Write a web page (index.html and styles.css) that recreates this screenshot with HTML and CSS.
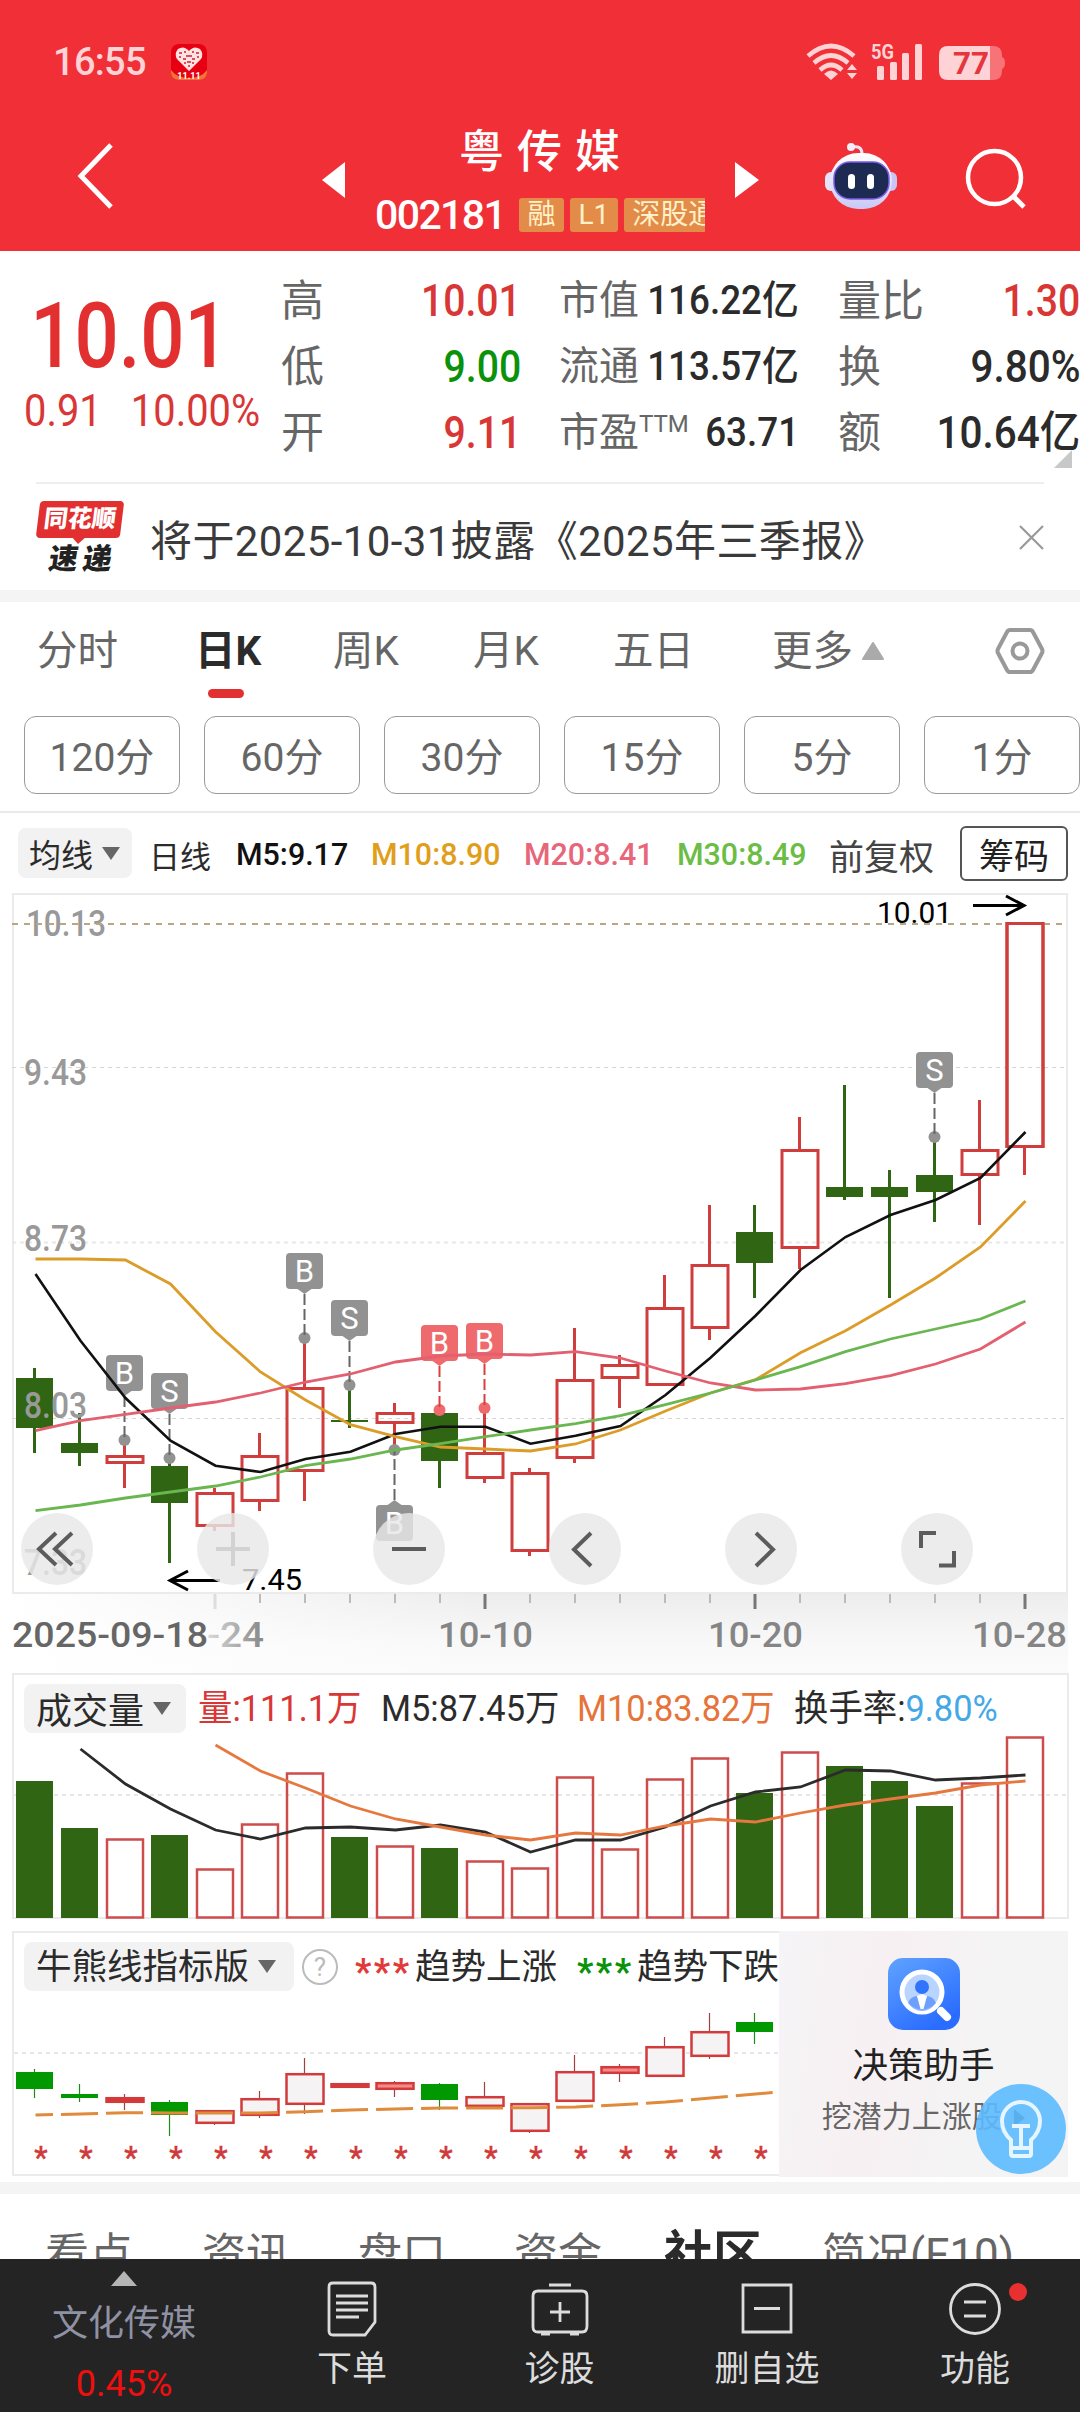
FILE: index.html
```html
<!DOCTYPE html>
<html lang="zh-CN">
<head>
  <meta charset="UTF-8">
  <meta name="viewport" content="width=device-width, initial-scale=1.0">
  <title>粤传媒 002181</title>
  <link rel="stylesheet" href="styles.css">
</head>
<body>
  <header class="header">
    <div class="status-bar">
      <span class="clock">16:55</span>
      <svg class="app-icon" width="36" height="36" viewBox="0 0 36 36">
        <rect width="36" height="36" rx="8" fill="#e60012"/>
        <path d="M0 26Q6 34 18 34T36 26V29Q35 36 28 36H8Q1 36 0 29Z" fill="#f4713a"/>
        <path d="M18 27L6 15Q3 10 7 5Q13 1 18 7Q23 1 29 5Q33 10 30 15Z" fill="#ffe3e3"/>
        <path d="M8 9h3M13 8h2M21 8h2M25 9h3M15 12h6M8 13h2M12 15h3M21 15h3M26 13h2M16 18h4M13 19h2M21 19h2M17 22h2" stroke="#d0202c" stroke-width="1.500"/>
        <text x="18" y="35" font-size="9" font-weight="700" text-anchor="middle" fill="#fff">11.11</text>
      </svg>
      <svg class="status-icons" width="200" height="40" viewBox="806 42 200 40">
        <g fill="none" stroke="#ffd3d5" stroke-width="4.6">
          <path d="M808 56Q831 36 854 56"/>
          <path d="M814 63Q831 48 848 63"/>
          <path d="M820 70Q831 60 842 70"/>
        </g>
        <g fill="#ffd3d5">
          <path d="M824 74Q831 67 838 74L831 80Z"/>
          <path d="M847 70L852 64L857 70ZM847 73H857L852 79Z"/>
          <text x="871" y="59" font-size="21" font-weight="700" textLength="23" lengthAdjust="spacingAndGlyphs">5G</text>
          <rect x="877" y="66" width="7" height="14" rx="1.5"/>
          <rect x="890" y="62" width="7" height="18" rx="1.5"/>
          <rect x="902" y="53" width="7" height="27" rx="1.5"/>
          <rect x="915" y="44" width="7" height="36" rx="1.5"/>
        </g>
        <path d="M990 46H993Q1002 46 1002 55V57Q1005 58 1005 63Q1005 68 1002 69V71Q1002 80 993 80H990Z" fill="#f87378"/>
        <path d="M948 46H990V80H948Q939 80 939 71V55Q939 46 948 46Z" fill="#ffd3d5"/>
        <text x="953" y="74" font-size="31" font-weight="700" fill="#e5363e" textLength="36" lengthAdjust="spacingAndGlyphs">77</text>
      </svg>
    </div>
    <div class="title-bar">
      <svg class="back" width="40" height="72" viewBox="0 0 40 72"><path d="M35 5L5 36L35 67" fill="none" stroke="#fff" stroke-width="5"/></svg>
      <svg class="prev" width="23" height="36" viewBox="0 0 23 36"><path d="M23 0V36L0 18Z" fill="#fff"/></svg>
      <div class="stock">
        <h1>粤传媒</h1>
        <div class="stock-sub">
          <span class="code">002181</span>
          <span class="tag">融</span>
          <span class="tag">L1</span>
          <span class="tag">深股通</span>
        </div>
      </div>
      <svg class="next" width="24" height="36" viewBox="0 0 24 36"><path d="M0 0V36L24 18Z" fill="#fff"/></svg>
      <svg class="robot" width="74" height="68" viewBox="825 142 74 68">
        <defs>
          <linearGradient id="shell" x1="0" y1="0" x2="0" y2="1">
            <stop offset="0" stop-color="#fff"/><stop offset="1" stop-color="#c9c8f6"/>
          </linearGradient>
        </defs>
        <path d="M852 147Q862 145 862 154" fill="none" stroke="#e9e4f8" stroke-width="3"/>
        <circle cx="851" cy="147" r="4" fill="#f3eefb"/>
        <rect x="825" y="172" width="14" height="19" rx="6" fill="#e4e3fa"/>
        <rect x="883" y="172" width="14" height="19" rx="6" fill="#c8c6f5"/>
        <rect x="830" y="153" width="62" height="56" rx="28" fill="url(#shell)"/>
        <rect x="834" y="162" width="55" height="37" rx="16" fill="#1d2a52" stroke="#7c5be8" stroke-width="1.5"/>
        <rect x="848" y="174" width="7" height="15" rx="3.5" fill="#fff"/>
        <rect x="867" y="174" width="7" height="15" rx="3.5" fill="#fff"/>
      </svg>
      <svg class="search" width="62" height="62" viewBox="965 147 62 62">
        <circle cx="994.5" cy="177.500" r="26.500" fill="none" stroke="#fff" stroke-width="4.500"/>
        <path d="M1013 196L1024 207" stroke="#fff" stroke-width="5"/>
      </svg>
    </div>
  </header>

  <section class="quote">
    <div class="price">
      <div class="last">10.01</div>
      <div class="change"><span>0.91</span><span>10.00%</span></div>
    </div>
    <dl class="col">
      <dt>高</dt><dd class="num up">10.01</dd>
      <dt>低</dt><dd class="num down">9.00</dd>
      <dt>开</dt><dd class="num up">9.11</dd>
    </dl>
    <dl class="col col-cap">
      <dt>市值</dt><dd class="num">116.22亿</dd>
      <dt>流通</dt><dd class="num">113.57亿</dd>
      <dt>市盈<sup>TTM</sup></dt><dd class="num">63.71</dd>
    </dl>
    <dl class="col col-amount">
      <dt>量比</dt><dd class="num up">1.30</dd>
      <dt>换</dt><dd class="num wide">9.80%</dd>
      <dt>额</dt><dd class="num wide">10.64亿</dd>
    </dl>
    <span class="corner"></span>
  </section>

  <section class="news">
    <div class="news-logo"><b>同花顺</b><i>速递</i></div>
    <p>将于2025-10-31披露《2025年三季报》</p>
    <svg width="25" height="25" viewBox="0 0 25 25"><path d="M1 1L24 24M24 1L1 24" stroke="#999" stroke-width="2.200"/></svg>
  </section>

  <div class="band"></div>

  <nav class="tabs">
    <span>分时</span>
    <span class="active">日K</span>
    <span>周K</span>
    <span>月K</span>
    <span>五日</span>
    <span>更多<svg width="22" height="18" viewBox="0 0 22 18"><path d="M11 1L21 17H1Z" fill="#aaa" stroke="#aaa" stroke-width="2" stroke-linejoin="round"/></svg></span>
    <svg width="50" height="48" viewBox="0 0 50 48">
      <path d="M15 3H35Q37 3 38 5L47 22Q48 24 47 26L38 43Q37 45 35 45H15Q13 45 12 43L3 26Q2 24 3 22L12 5Q13 3 15 3Z" fill="none" stroke="#999" stroke-width="4"/>
      <circle cx="25" cy="24" r="7.500" fill="none" stroke="#999" stroke-width="4"/>
    </svg>
  </nav>

  <div class="periods">
    <button>120分</button>
    <button>60分</button>
    <button>30分</button>
    <button>15分</button>
    <button>5分</button>
    <button>1分</button>
  </div>

  <div class="legend ma-legend">
    <span class="pill">均线<i class="caret"></i></span>
    <span class="day">日线</span>
    <span class="ma5">M5:9.17</span>
    <span class="ma10">M10:8.90</span>
    <span class="ma20">M20:8.41</span>
    <span class="ma30">M30:8.49</span>
    <span class="adjust">前复权</span>
    <button class="chips">筹码</button>
  </div>

  <section class="kline">
    <svg id="kline" width="1080" height="780" viewBox="0 893 1080 780"></svg>
    <div class="controls">
      <button><svg viewBox="0 0 72 72"><path d="M35 20L18 36L35 52M51 20L34 36L51 52"/></svg></button>
      <button class="disabled"><svg viewBox="0 0 72 72"><path d="M19 36H53M36 19V53"/></svg></button>
      <button><svg viewBox="0 0 72 72"><path d="M19 36H53"/></svg></button>
      <button><svg viewBox="0 0 72 72"><path d="M42 20L25 36.500L42 53"/></svg></button>
      <button><svg viewBox="0 0 72 72"><path d="M31 20L48 36.500L31 53"/></svg></button>
      <button><svg viewBox="0 0 72 72"><path d="M20 35V20H35M38 52.500H53V38"/></svg></button>
    </div>
  </section>

  <section class="volume">
    <div class="legend vol-legend">
      <span class="pill">成交量<i class="caret"></i></span>
      <span class="up">量:111.1万</span>
      <span>M5:87.45万</span>
      <span class="vol10">M10:83.82万</span>
      <span class="rate">换手率:<em>9.80%</em></span>
    </div>
    <svg id="volume" width="1052" height="184" viewBox="14 1735 1052 184"></svg>
  </section>

  <section class="indicator">
    <div class="bull">
      <div class="legend bull-legend">
        <span class="pill">牛熊线指标版<i class="caret"></i></span>
        <svg width="36" height="36" viewBox="0 0 36 36">
          <circle cx="18" cy="18" r="17" fill="none" stroke="#bbb" stroke-width="2"/>
          <text x="18" y="27" font-size="26" text-anchor="middle" fill="#bbb">?</text>
        </svg>
        <span class="trend-up"><em>***</em>趋势上涨</span>
        <span class="trend-down"><em>***</em>趋势下跌</span>
      </div>
      <svg id="bull" width="765" height="182" viewBox="14 1993 765 182"></svg>
    </div>
    <aside class="promo">
      <svg width="72" height="72" viewBox="0 0 72 72">
        <defs>
          <linearGradient id="blue" x1="0" y1="0" x2="0.600" y2="1">
            <stop offset="0" stop-color="#60a3ff"/><stop offset="1" stop-color="#2a6cff"/>
          </linearGradient>
        </defs>
        <rect width="72" height="72" rx="15" fill="url(#blue)"/>
        <circle cx="34" cy="34" r="20" fill="#b9d5ff" stroke="#fff" stroke-width="5"/>
        <circle cx="34" cy="29" r="7" fill="#2f74fb"/>
        <path d="M20 45Q22 39 29 38L34 50L39 38Q46 39 48 45Q42 53 34 53Q26 53 20 45Z" fill="#2f74fb" opacity=".55"/>
        <path d="M29 38L34 36L39 38L35.500 51H32.500Z" fill="#fff"/>
        <path d="M53 53L59 59" stroke="#fff" stroke-width="8" stroke-linecap="round"/>
      </svg>
      <strong>决策助手</strong>
      <small>挖潜力上涨股 <i></i></small>
    </aside>
  </section>

  <div class="band"></div>

  <nav class="sections">
    <span>看点</span>
    <span>资讯</span>
    <span>盘口</span>
    <span>资金</span>
    <span class="active">社区</span>
    <span>简况(F10)</span>
  </nav>

  <footer class="bottom-nav">
    <div class="sector">
      <svg width="26" height="15" viewBox="0 0 26 15"><path d="M13 0L26 15H0Z" fill="#b5b5b5"/></svg>
      <span>文化传媒</span>
      <b>0.45%</b>
    </div>
    <div class="item">
      <svg width="60" height="60" viewBox="0 0 60 60"><path d="M11 4H49Q53 4 53 8V43L43 56H11Q7 56 7 52V8Q7 4 11 4ZM14 17H46M14 24H46M14 31H46M14 38H37"/></svg>
      <span>下单</span>
    </div>
    <div class="item">
      <svg width="60" height="60" viewBox="0 0 60 60"><path d="M8 12H52Q57 12 57 17V47Q57 53 52 53H8Q3 53 3 48V17Q3 12 8 12ZM19 6H41M20 33H40M30 23V43M11 55H20M40 55H49"/></svg>
      <span>诊股</span>
    </div>
    <div class="item">
      <svg width="60" height="60" viewBox="0 0 60 60"><path d="M6 6H54V53H6ZM17 29.500H43"/></svg>
      <span>删自选</span>
    </div>
    <div class="item">
      <svg width="60" height="60" viewBox="0 0 60 60"><circle cx="30" cy="30" r="24.500"/><path d="M19 23H41M19 37H41"/></svg>
      <span>功能</span>
      <i class="dot"></i>
    </div>
  </footer>

  <div class="bulb">
    <svg width="90" height="90" viewBox="0 0 90 90">
      <path d="M35 61V56Q26 48 26 37A19 19 0 0 1 64 37Q64 48 55 56V70Q55 72 53 72H37Q35 72 35 70ZM36 64H54M45 62V43M36 42H54"/>
    </svg>
  </div>

  <script>
    const RED = '#cf3d3d';
    const GREEN = '#306514';
    const cx = i => 34.5 + i * 45;

    function rect(x, y, w, h, attrs) {
      return `<rect x="${x}" y="${y}" width="${w}" height="${h}" ${attrs}/>`;
    }

    function line(x1, y1, x2, y2, color, width, extra = '') {
      return `<line x1="${x1}" y1="${y1}" x2="${x2}" y2="${y2}" stroke="${color}" stroke-width="${width}" ${extra}/>`;
    }

    function label(x, y, str, size, length, color, extra = '') {
      return `<text x="${x}" y="${y}" font-size="${size}" fill="${color}" textLength="${length}" lengthAdjust="spacingAndGlyphs" ${extra}>${str}</text>`;
    }

    // values start at candle number "from"
    function curve(values, color, width, from = 0, extra = '') {
      const points = values.map((y, i) => `${cx(i + from) + 1},${y}`).join(' ');
      return `<polyline points="${points}" fill="none" stroke="${color}" stroke-width="${width}" ${extra}/>`;
    }

    // [type, body top, body bottom, wick top, wick bottom]
    const candles = [
      ['g', 1378, 1428, 1368, 1453], ['g', 1443, 1453, 1413, 1466], ['r', 1455, 1464, 1441, 1488],
      ['g', 1466, 1503, 1458, 1563], ['r', 1492, 1527, 1488, 1531], ['r', 1455, 1502, 1433, 1511],
      ['r', 1387, 1472, 1338, 1501], ['g', 1420, 1422, 1385, 1428], ['r', 1412, 1424, 1403, 1448],
      ['g', 1413, 1461, 1411, 1488], ['r', 1452, 1479, 1408, 1483], ['r', 1472, 1552, 1468, 1556],
      ['r', 1379, 1459, 1328, 1463], ['r', 1364, 1379, 1355, 1408], ['r', 1307, 1386, 1275, 1386],
      ['r', 1264, 1329, 1205, 1340], ['g', 1232, 1263, 1205, 1298], ['r', 1149, 1249, 1117, 1269],
      ['g', 1187, 1197, 1085, 1200], ['g', 1187, 1197, 1170, 1298], ['g', 1175, 1192, 1137, 1222],
      ['r', 1149, 1176, 1100, 1225], ['r', 922, 1148, 922, 1175]
    ];

    const ma5 = [1274, 1340.7, 1398, 1440.7, 1465.7, 1472, 1459, 1451.7, 1434, 1426.7, 1426.7, 1443.7, 1435.7, 1426, 1395, 1357.7, 1315.7, 1270, 1237, 1215, 1200, 1178, 1132];
    const ma10 = [1259, 1259, 1260, 1284, 1331.7, 1372, 1400, 1424.7, 1436.7, 1447, 1449, 1451, 1444, 1430, 1411, 1393, 1379.7, 1352.7, 1330.7, 1305, 1278, 1247, 1201];
    const ma20 = [1430.7, 1420.7, 1414.3, 1408, 1402, 1393, 1382, 1374, 1362, 1356, 1354, 1355, 1351.7, 1358, 1371, 1383, 1390, 1389, 1383.7, 1375.7, 1364, 1349, 1322];
    const ma30 = [1510.7, 1505, 1498, 1492, 1486, 1477, 1465.7, 1459, 1450, 1443.7, 1436.7, 1430, 1423.7, 1415.7, 1404.7, 1393, 1380, 1366.7, 1351.7, 1339, 1329, 1319, 1301];

    // buy / sell flags: [candle, letter, box top, dot y, color]
    const flags = [
      [2, 'B', 1355, 1440, '#929292'], [3, 'S', 1373, 1458, '#929292'], [6, 'B', 1253, 1338, '#929292'],
      [7, 'S', 1300, 1385, '#929292'], [8, 'B', 1505, 1450, '#929292'], [9, 'B', 1325, 1410, '#ee6a6d'],
      [10, 'B', 1323, 1408, '#ee6a6d'], [20, 'S', 1052, 1137, '#929292']
    ];

    function drawFlag([i, letter, top, dot, color]) {
      const x = cx(i);
      const above = dot > top;
      const edge = above ? top + 36 : top;
      const tip = above ? edge + 5 : edge - 5;
      const stem = color === '#929292' ? '#666' : '#d84040';
      return `<circle cx="${x}" cy="${dot}" r="6" fill="${color}"/>` +
        line(x, tip, x, dot, stem, 2, 'stroke-dasharray="11 4"') +
        `<path d="M${x - 7} ${edge}H${x + 7}L${x} ${tip}Z" fill="${color}"/>` +
        rect(x - 18.5, top, 37, 36, `rx="4" fill="${color}"`) +
        `<text x="${x}" y="${top + 29}" font-size="31" text-anchor="middle" fill="#fff">${letter}</text>`;
    }

    function drawCandle([type, top, bottom, high, low], i) {
      const x = cx(i);
      if (type === 'g') {
        return line(x, high, x, low, GREEN, 3) + rect(x - 18.5, top, 37, bottom - top, `fill="${GREEN}"`);
      }
      return line(x, high, x, top, RED, 3) + line(x, bottom, x, low, RED, 3) +
        rect(x - 17.5, top + 1.5, 36, bottom - top - 3, `fill="none" stroke="${RED}" stroke-width="3"`);
    }

    function drawKline() {
      let s = `<defs>
        <linearGradient id="axis" x1="0" y1="0" x2="0" y2="1"><stop offset="0" stop-color="#ededed"/><stop offset=".6" stop-color="#f8f8f8"/><stop offset="1" stop-color="#fbfbfb"/></linearGradient>
        <linearGradient id="fade" x1="0" y1="0" x2="1" y2="0"><stop offset="0" stop-color="#fff"/><stop offset="1" stop-color="#fff" stop-opacity="0"/></linearGradient>
        <linearGradient id="ink" gradientUnits="userSpaceOnUse" x1="205" y1="0" x2="263" y2="0"><stop offset="0" stop-color="#ddd"/><stop offset="1" stop-color="#888"/></linearGradient>
      </defs>`;
      s += rect(13, 1594, 1055, 79, 'fill="url(#axis)"') + rect(13, 1594, 480, 79, 'fill="url(#fade)"');
      s += rect(13, 894, 1054, 699, 'fill="none" stroke="#ebebeb" stroke-width="2"');
      s += line(12, 1067.5, 1067, 1067.5, '#d6d6d6', 1, 'stroke-dasharray="4 4"');
      s += line(12, 1242.5, 1067, 1242.5, '#e8e8e8', 2, 'stroke-dasharray="4 4"');
      s += line(12, 1418.5, 1067, 1418.5, '#d6d6d6', 1, 'stroke-dasharray="4 4"');
      s += candles.map(drawCandle).join('');
      s += label(26, 936, '10.13', 36, 80, '#999', 'font-weight="500"');
      s += line(12, 924, 1067, 924, '#b8a882', 2, 'stroke-dasharray="6 6"');
      s += candles.slice(22).map(c => drawCandle(c, 22)).join('');
      s += label(24, 1085, '9.43', 36, 63, '#999', 'font-weight="500"');
      s += label(24, 1251, '8.73', 36, 63, '#999', 'font-weight="500"');
      s += label(24, 1418, '8.03', 36, 63, '#999', 'font-weight="500"');
      s += label(24, 1575, '7.33', 36, 63, '#999', 'font-weight="500"');
      s += flags.map(drawFlag).join('');
      s += curve(ma5, '#111', 2.6) + curve(ma10, '#dc9c28', 2.8) + curve(ma20, '#e2606f', 2.8) + curve(ma30, '#6ab650', 2.8);
      // highest and lowest price
      s += label(877, 923, '10.01', 30, 75, '#000');
      s += '<path d="M973 905.500H1023M1006 896L1024 905.500L1006 915" fill="none" stroke="#000" stroke-width="3"/>';
      s += label(242, 1590, '7.45', 30, 60, '#000');
      s += '<path d="M220 1580.500H171M188 1571L170 1580.500L188 1590" fill="none" stroke="#000" stroke-width="3"/>';
      for (let i = 4; i <= 22; i++) {
        const major = i === 10 || i === 16 || i === 22;
        s += line(cx(i) + 0.5, 1594, cx(i) + 0.5, major || i === 4 ? 1609 : 1603, major ? '#777' : i === 4 ? '#ddd' : '#bbb', major || i === 4 ? 3 : 2);
      }
      s += label(12, 1647, '2025-09-18', 35, 196, '#666', 'font-weight="500"');
      s += label(207, 1647, '-24', 35, 57, 'url(#ink)', 'font-weight="500"');
      s += label(438, 1647, '10-10', 35, 95, '#858585', 'font-weight="500"');
      s += label(708, 1647, '10-20', 35, 95, '#858585', 'font-weight="500"');
      s += label(972, 1647, '10-28', 35, 95, '#858585', 'font-weight="500"');
      document.getElementById('kline').innerHTML = s;
    }

    function drawVolume() {
      const types = 'ggrgrrrgrgrrrrrrgrgggrr';
      const tops = [1781, 1828, 1838, 1835, 1868, 1823, 1772, 1837, 1845, 1848, 1860, 1867, 1776, 1848, 1778, 1757, 1793, 1751, 1766, 1781, 1806, 1782, 1736];
      const vol5 = [1749, 1784, 1809, 1830, 1839, 1828, 1827, 1830, 1825, 1832, 1852, 1840, 1840, 1827, 1806, 1792, 1787, 1770, 1771, 1780, 1778, 1775];
      const vol10 = [1745, 1771, 1788, 1806, 1819, 1827, 1835, 1840, 1833, 1835, 1826, 1819, 1822, 1813, 1805, 1799, 1793, 1785, 1781];
      let s = line(14, 1795, 1066, 1795, '#e6e6e6', 2, 'stroke-dasharray="4 4"');
      tops.forEach((top, i) => {
        const x = cx(i);
        s += types[i] === 'g'
          ? rect(x - 18.5, top, 37, 1918 - top, `fill="${GREEN}"`)
          : rect(x - 17.5, top + 1.5, 36, 1916 - top, 'fill="none" stroke="#cd4c4c" stroke-width="2.500"');
      });
      s += curve(vol5, '#2b2b2b', 2.8, 1) + curve(vol10, '#e6783f', 2.8, 4);
      document.getElementById('volume').innerHTML = s;
    }

    function drawBull() {
      const bars = [
        ['g', 2072, 2089, 2069, 2098], ['g', 2094, 2098, 2084, 2102], ['f', 2097, 2103, 2094, 2110],
        ['g', 2102, 2115, 2100, 2136], ['r', 2110, 2124, 2110, 2125], ['r', 2098, 2116, 2091, 2118],
        ['r', 2073, 2105, 2058, 2114], ['f', 2083, 2088, 2083, 2088], ['p', 2082, 2090, 2081, 2097],
        ['g', 2084, 2100, 2083, 2110], ['r', 2096, 2107, 2082, 2107], ['r', 2103, 2132, 2103, 2133],
        ['r', 2071, 2102, 2055, 2102], ['p', 2066, 2074, 2064, 2082], ['r', 2046, 2077, 2037, 2077],
        ['r', 2031, 2057, 2013, 2059], ['g', 2022, 2032, 2013, 2044]
      ];
      const fills = { r: '#f5f3f3', f: '#d93535', p: '#f58a8a' };
      const trend = [2115, 2114, 2112.7, 2113, 2113, 2113, 2111.7, 2110, 2109, 2108, 2108, 2107.7, 2107, 2104.7, 2102, 2098, 2094, 2090];
      let s = line(14, 2053, 779, 2053, '#e6e6e6', 2, 'stroke-dasharray="4 4"');
      bars.forEach(([type, top, bottom, high, low], i) => {
        const x = cx(i);
        if (type === 'g') {
          s += line(x, high, x, low, '#1d8a1d', 1.2) + rect(x - 18.5, top, 37, bottom - top, 'fill="#029802"');
        } else {
          s += line(x, high, x, low, '#a04040', 1.2);
          s += rect(x - 18, top + 1.2, 37, bottom - top - 2.4, `fill="${fills[type]}" stroke="#d23b3b" stroke-width="2.500"`);
        }
        s += `<text x="${x + 6.5}" y="2168" font-size="31" text-anchor="middle" fill="#cf3a3a" stroke="#cf3a3a" stroke-width=".5">*</text>`;
      });
      s += curve(trend, '#e08a3c', 3, 0, 'stroke-dasharray="37 8.02" stroke-dashoffset="19.500"');
      document.getElementById('bull').innerHTML = s;
    }

    drawKline();
    drawVolume();
    drawBull();
  </script>
</body>
</html>
```

FILE: styles.css
```css
* {
  box-sizing: border-box;
}
body {
  margin: 0;
  width: 1080px;
  height: 2412px;
  overflow: hidden;
  position: relative;
  background: #fff;
  color: #2b2b2b;
  font-family: Roboto, "Noto Sans CJK SC", sans-serif;
}
h1, p, dl, dd {
  margin: 0;
}
i, em {
  font-style: normal;
}
svg {
  display: block;
  flex: none;
}
button {
  font: inherit;
  padding: 0;
  background: none;
}
.up {
  color: #d93636;
}
.down {
  color: #0a930a;
}

/* header */
.header {
  height: 251px;
  background: #f12f37;
  color: #fff;
}
.status-bar {
  display: flex;
  align-items: center;
  height: 124px;
  padding-left: 53px;
}
.clock {
  width: 118px;
  font-size: 38px;
  font-weight: 500;
  letter-spacing: -0.7px;
  color: #ffd3d5;
}
.status-icons {
  margin-left: 599px;
  overflow: visible;
}
.title-bar {
  display: flex;
  align-items: flex-start;
  height: 127px;
}
.back {
  margin: 16px 0 0 76px;
}
.prev {
  margin: 38px 0 0 206px;
}
.stock {
  width: 330px;
  margin-left: 30px;
  overflow: hidden;
}
.stock h1 {
  padding: 2px 0 0 84px;
  font-size: 45px;
  font-weight: 500;
  line-height: 54px;
  letter-spacing: 13px;
}
.stock-sub {
  display: flex;
  align-items: center;
  gap: 6px;
  height: 36px;
  margin-top: 17px;
  white-space: nowrap;
}
.code {
  flex: none;
  width: 136px;
  font-size: 41px;
  font-weight: 500;
  line-height: 36px;
  letter-spacing: -1.6px;
}
.tag {
  flex: none;
  padding: 0 8.5px;
  height: 34px;
  line-height: 34px;
  font-size: 28px;
  color: #fff1c9;
  background: #e38b48;
  border-radius: 3px;
}
.code + .tag {
  margin-left: 2px;
}
.next {
  margin: 38px 0 0 30px;
}
.robot {
  margin: 18px 0 0 66px;
}
.search {
  margin: 23px 0 0 66px;
}

/* quote */
.quote {
  position: relative;
  display: flex;
  height: 231px;
  padding-top: 17px;
}
.price {
  width: 281px;
  color: #e23030;
}
.last {
  padding-left: 30px;
  margin-top: 13px;
  font-size: 91px;
  font-weight: 500;
  line-height: 110px;
  transform: scaleX(0.855);
  transform-origin: 32px 0;
}
.change {
  display: flex;
  gap: 33px;
  margin: -6px 0 0 24px;
  font-size: 45px;
  line-height: 52px;
  transform: scaleX(0.885);
  transform-origin: 0 0;
  color: #d93636;
}
.col {
  display: grid;
  grid-template-columns: auto 1fr;
  grid-auto-rows: 66px;
  width: 240px;
  line-height: 66px;
  white-space: nowrap;
}
.col dt {
  font-size: 43px;
  color: #666;
}
.col .num {
  justify-self: end;
  font-size: 45px;
  font-weight: 500;
  transform: scaleX(0.87);
  transform-origin: 100% 0;
}
.col-cap {
  grid-template-columns: 76px 164px;
  margin-left: 38px;
}
.col-cap dt {
  font-size: 40px;
}
.col-cap sup {
  font-size: 24px;
  line-height: 0;
  vertical-align: 14px;
}
.col-cap .num {
  font-size: 40px;
  transform: scaleX(0.92);
}
.col-amount {
  width: 242px;
  margin-left: 39px;
}
.col .wide {
  font-size: 44px;
  transform: scaleX(0.92);
}
.corner {
  position: absolute;
  right: 8px;
  bottom: 14px;
  border-left: 18px solid transparent;
  border-bottom: 18px solid #c8c8c8;
}

/* news */
.news {
  display: flex;
  align-items: center;
  height: 108px;
  margin: 0 36px;
  border-top: 2px solid #eee;
}
.news-logo {
  width: 88px;
  height: 74px;
  margin-top: 1px;
}
.news-logo b {
  position: relative;
  display: block;
  height: 37px;
  margin: 0 2px;
  font-size: 24px;
  font-weight: 900;
  line-height: 37px;
  text-align: center;
  color: #fff;
  background: #e23030;
  border-radius: 4px;
  transform: skewX(-7deg);
}
.news-logo b::after {
  content: "";
  position: absolute;
  left: 36px;
  top: 36px;
  border: 7px solid transparent;
  border-top-color: #e23030;
}
.news-logo i {
  display: block;
  padding-left: 13px;
  font-size: 29px;
  font-weight: 900;
  line-height: 42px;
  letter-spacing: 5px;
  color: #222;
  transform: skewX(-9deg);
}
.news p {
  flex: 1;
  padding-left: 26px;
  font-size: 42px;
  letter-spacing: 0.4px;
  color: #3a3a3a;
  white-space: nowrap;
}
.band {
  height: 12px;
  background: #f4f4f4;
}

/* period tabs */
.tabs {
  display: grid;
  grid-template-columns: 158px 138px 140px 140px 159px 223px auto;
  align-items: center;
  height: 98px;
  padding-left: 37px;
  font-size: 40.5px;
  line-height: 98px;
  color: #666;
}
.tabs span {
  position: relative;
}
.tabs span svg {
  display: inline-block;
  margin-left: 9px;
  vertical-align: 5px;
}
.tabs .active {
  font-weight: 700;
  color: #2b2b2b;
}
.tabs .active::after {
  content: "";
  position: absolute;
  left: 13px;
  bottom: 2px;
  width: 36px;
  height: 9px;
  border-radius: 5px;
  background: #e23030;
}
.periods {
  display: flex;
  gap: 24px;
  height: 113px;
  padding: 16px 0 0 24px;
  border-bottom: 2px solid #e9e9e9;
}
.periods button {
  flex: none;
  width: 156px;
  height: 78px;
  padding-bottom: 2px;
  font-size: 39px;
  color: #666;
  border: 1.5px solid #999;
  border-radius: 12px;
}

/* legends */
.legend {
  display: grid;
  align-items: center;
  white-space: nowrap;
}
.legend > span {
  transform-origin: 0 50%;
}
.pill {
  display: flex;
  align-items: center;
  gap: 9px;
  height: 49px;
  background: #f2f2f2;
  border-radius: 8px;
}
.caret {
  border: 9px solid transparent;
  border-top: 13px solid #666;
  border-bottom: 0;
}
.ma-legend {
  grid-template-columns: 131px 87px 135px 153px 153px 152px 131px 108px;
  height: 80px;
  padding-left: 18px;
  font-size: 32px;
}
.ma-legend > span {
  padding-top: 2px;
}
.ma-legend .pill {
  width: 114px;
  height: 50px;
  padding: 0 0 0 11px;
}
.ma-legend .day {
  font-size: 31px;
}
.ma5, .ma10, .ma20, .ma30 {
  font-weight: 500;
  transform: scaleX(0.95);
}
.ma5 {
  color: #111;
}
.ma10 {
  color: #e09e1a;
}
.ma20 {
  color: #e8667a;
}
.ma30 {
  color: #6cbd45;
}
.ma-legend .adjust {
  font-size: 35px;
  color: #444;
}
.chips {
  height: 55px;
  font-size: 35px;
  color: #222;
  border: 2px solid #555;
  border-radius: 6px;
}

/* candles */
.kline {
  position: relative;
  height: 780px;
}
.controls {
  position: absolute;
  left: 21px;
  top: 620px;
  display: flex;
  gap: 104px;
}
.controls button {
  width: 72px;
  height: 72px;
  border: 0;
  border-radius: 50%;
  background: rgba(232, 232, 232, 0.82);
}
.controls path {
  fill: none;
  stroke: #5c5c5c;
  stroke-width: 4;
}
.controls .disabled path {
  stroke: #d2d2d2;
}

/* volume */
.volume {
  height: 246px;
  margin: 0 11px 0 12px;
  border: 2px solid #ebebeb;
}
.volume svg {
  overflow: visible;
}
.vol-legend {
  grid-template-columns: 174px 183px 196px 217px auto;
  height: 60px;
  padding: 6px 0 0 10px;
  font-size: 36px;
}
.volume .pill, .bull .pill {
  padding-left: 12px;
}
.volume .pill {
  width: 162px;
}
.vol-legend > span:not(.pill) {
  padding-top: 2px;
  line-height: 44px;
  transform: scaleX(0.955);
}
.vol10 {
  color: #e6743a;
}
.rate em {
  color: #45a8e6;
}

/* bull and bear */
.indicator {
  display: flex;
  height: 251px;
  margin: 12px 11px 0 12px;
}
.bull {
  width: 767px;
  height: 245px;
  overflow: hidden;
  border: 2px solid #ebebeb;
  border-right: 0;
}
.bull-legend {
  grid-template-columns: 278px 53px 222px auto;
  height: 60px;
  padding: 7px 0 0 10px;
  font-size: 35.5px;
  line-height: 44px;
}
.bull .pill {
  width: 270px;
}
.bull-legend em {
  display: inline-block;
  width: 60px;
  font-size: 36px;
  font-weight: 700;
  letter-spacing: 2.5px;
  line-height: 20px;
  vertical-align: -5px;
  color: #e03a3a;
}
.bull-legend .trend-down em {
  color: #0a930a;
}
.promo {
  display: flex;
  flex-direction: column;
  align-items: center;
  width: 289px;
  height: 246px;
  padding-top: 27px;
  background: linear-gradient(100deg, #f5f4f6, #f7f0f2 35%, #f4f4f5 70%);
}
.promo strong {
  margin-top: 13px;
  font-size: 35.5px;
  font-weight: 400;
  line-height: 46px;
  color: #222;
}
.promo small {
  margin-top: 3px;
  font-size: 30px;
  line-height: 50px;
  color: #666;
}
.promo small i {
  display: inline-block;
  margin-left: 5px;
  border: 9px solid transparent;
  border-left: 11px solid #444;
  border-right: 0;
}

/* community tabs, cut by the bottom bar */
.sections {
  display: grid;
  grid-template-columns: 157px 156px 156px 150px 158px auto;
  height: 65px;
  padding-left: 45px;
  overflow: hidden;
  font-size: 44px;
  line-height: 122px;
  color: #666;
  white-space: nowrap;
}
.sections .active {
  font-size: 49px;
  font-weight: 700;
  color: #2b2b2b;
}

/* bottom bar */
.bottom-nav {
  display: grid;
  grid-template-columns: 248px 208px 207px 208px 208px;
  height: 153px;
  background: #242424;
  color: #dcdcdc;
}
.sector, .item {
  position: relative;
  display: flex;
  flex-direction: column;
  align-items: center;
}
.sector {
  padding-top: 12px;
  font-size: 36px;
  line-height: 50px;
  color: #8f92a3;
}
.sector span {
  margin-top: 13px;
}
.sector b {
  margin-top: 10px;
  font-weight: 400;
  color: #f00f0f;
}
.item {
  padding-top: 20px;
  font-size: 35px;
  line-height: 50px;
}
.item span {
  margin-top: 6px;
}
.item svg {
  fill: none;
  stroke: #dcdcdc;
  stroke-width: 2.8;
}
.dot {
  position: absolute;
  left: 138px;
  top: 24px;
  width: 18px;
  height: 18px;
  border-radius: 50%;
  background: #e83030;
}

.bulb {
  position: absolute;
  left: 976px;
  top: 2084px;
  border-radius: 50%;
  background: rgba(92, 186, 255, 0.9);
}
.bulb path {
  fill: none;
  stroke: #e6f5ff;
  stroke-width: 4;
}
```
